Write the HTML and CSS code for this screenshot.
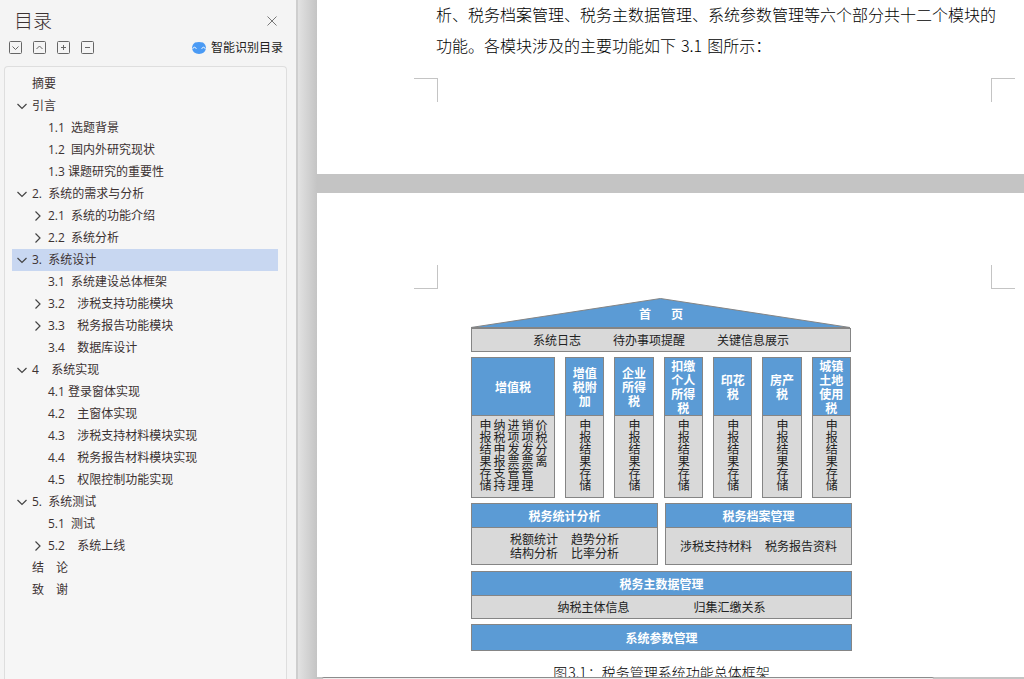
FILE: index.html
```html
<!DOCTYPE html>
<html lang="zh-CN">
<head>
<meta charset="utf-8">
<meta name="viewport" content="width=device-width, initial-scale=1">
<title>目录</title>
<link rel="stylesheet" href="styles.css">
</head>
<body>
<svg class="defs" aria-hidden="true">
  <symbol id="down" viewBox="0 0 12 12"><path d="M1.5 4 6 8.500 10.500 4"/></symbol>
  <symbol id="right" viewBox="0 0 12 12"><path d="M3.500 1.500 8 6 3.500 10.500"/></symbol>
</svg>
<aside class="sidebar">
  <header class="head">
    <h1 class="title">目录</h1>
    <button class="icon-btn" type="button" aria-label="关闭"><svg class="close" viewBox="0 0 10 10"><path d="M.5.5l9 9M9.500.5l-9 9"/></svg></button>
  </header>
  <div class="tools">
    <button class="icon-btn" type="button" aria-label="展开"><svg class="tool" viewBox="0 0 14 14"><rect x=".5" y=".5" width="12" height="12" rx="1"/><path d="M3.500 5.500l3 3 3-3"/></svg></button>
    <button class="icon-btn" type="button" aria-label="收起"><svg class="tool" viewBox="0 0 14 14"><rect x=".5" y=".5" width="12" height="12" rx="1"/><path d="M3.500 8l3-3 3 3"/></svg></button>
    <button class="icon-btn" type="button" aria-label="增加"><svg class="tool" viewBox="0 0 14 14"><rect x=".5" y=".5" width="12" height="12" rx="1"/><path d="M4 6.500h5M6.500 4v5"/></svg></button>
    <button class="icon-btn" type="button" aria-label="减少"><svg class="tool" viewBox="0 0 14 14"><rect x=".5" y=".5" width="12" height="12" rx="1"/><path d="M4 6.500h5"/></svg></button>
    <button class="smart" type="button"><svg class="robot" viewBox="0 0 14 12"><path class="face" d="M3 .5Q7-.5 11 .5 14 2.500 14 6.500 13 11.500 7 12 1 11.500 0 6.500 0 2.500 3 .5z"/><path class="eyes" d="M.5 6.500q2-2.500 4 0M9.500 6.500q2-2.500 4 0"/></svg>智能识别目录</button>
  </div>
  <nav class="tree" aria-label="目录">
    <div class="row"><a class="link" href="#">摘要</a></div>
    <div class="row"><button class="toggle" type="button" aria-label="折叠"><svg class="chev"><use href="#down"/></svg></button><a class="link" href="#">引言</a></div>
    <div class="row sub"><a class="link" href="#">1.1  选题背景</a></div>
    <div class="row sub"><a class="link" href="#">1.2  国内外研究现状</a></div>
    <div class="row sub"><a class="link" href="#">1.3 课题研究的重要性</a></div>
    <div class="row"><button class="toggle" type="button" aria-label="折叠"><svg class="chev"><use href="#down"/></svg></button><a class="link" href="#">2.  系统的需求与分析</a></div>
    <div class="row sub"><button class="toggle" type="button" aria-label="展开"><svg class="chev"><use href="#right"/></svg></button><a class="link" href="#">2.1  系统的功能介绍</a></div>
    <div class="row sub"><button class="toggle" type="button" aria-label="展开"><svg class="chev"><use href="#right"/></svg></button><a class="link" href="#">2.2  系统分析</a></div>
    <div class="row current"><button class="toggle" type="button" aria-label="折叠"><svg class="chev"><use href="#down"/></svg></button><a class="link" href="#" aria-current="true">3.  系统设计</a></div>
    <div class="row sub"><a class="link" href="#">3.1  系统建设总体框架</a></div>
    <div class="row sub"><button class="toggle" type="button" aria-label="展开"><svg class="chev"><use href="#right"/></svg></button><a class="link" href="#">3.2    涉税支持功能模块</a></div>
    <div class="row sub"><button class="toggle" type="button" aria-label="展开"><svg class="chev"><use href="#right"/></svg></button><a class="link" href="#">3.3    税务报告功能模块</a></div>
    <div class="row sub"><a class="link" href="#">3.4    数据库设计</a></div>
    <div class="row"><button class="toggle" type="button" aria-label="折叠"><svg class="chev"><use href="#down"/></svg></button><a class="link" href="#">4    系统实现</a></div>
    <div class="row sub"><a class="link" href="#">4.1 登录窗体实现</a></div>
    <div class="row sub"><a class="link" href="#">4.2    主窗体实现</a></div>
    <div class="row sub"><a class="link" href="#">4.3    涉税支持材料模块实现</a></div>
    <div class="row sub"><a class="link" href="#">4.4    税务报告材料模块实现</a></div>
    <div class="row sub"><a class="link" href="#">4.5    权限控制功能实现</a></div>
    <div class="row"><button class="toggle" type="button" aria-label="折叠"><svg class="chev"><use href="#down"/></svg></button><a class="link" href="#">5.  系统测试</a></div>
    <div class="row sub"><a class="link" href="#">5.1  测试</a></div>
    <div class="row sub"><button class="toggle" type="button" aria-label="展开"><svg class="chev"><use href="#right"/></svg></button><a class="link" href="#">5.2    系统上线</a></div>
    <div class="row"><a class="link" href="#">结　论</a></div>
    <div class="row"><a class="link" href="#">致　谢</a></div>
  </nav>
</aside>
<main class="workspace">
  <div class="pages">
    <section class="page first">
      <p class="prose">析、税务档案管理、税务主数据管理、系统参数管理等六个部分共十二个模块的<br>功能。各模块涉及的主要功能如下<span class="num">3.1</span>图所示：</p>
      <div class="marks"><i class="mark tr"></i><i class="mark tl"></i></div>
    </section>
    <section class="page second">
      <div class="marks"><i class="mark br"></i><i class="mark bl"></i></div>
      <figure class="figure">
        <div class="house">
          <div class="roof">
            <svg class="gable" viewBox="0 0 381 30" preserveAspectRatio="none"><path d="M0 29.500 190 .5 380 29.500z"/></svg>
            <b class="roof-text"><span>首</span><span>页</span></b>
          </div>
          <div class="beam"><span>系统日志</span><span>待办事项提醒</span><span>关键信息展示</span></div>
          <div class="pillars">
            <div class="card"><b class="cap">增值税</b><div class="vert">申报结果存储<br>纳税申报支持<br>进项发票管理<br>销项发票管理<br>价税分离</div></div>
            <div class="card"><b class="cap">增值<br>税附<br>加</b><div class="vert">申报结果存储</div></div>
            <div class="card"><b class="cap">企业<br>所得<br>税</b><div class="vert">申报结果存储</div></div>
            <div class="card"><b class="cap">扣缴<br>个人<br>所得<br>税</b><div class="vert">申报结果存储</div></div>
            <div class="card"><b class="cap">印花<br>税</b><div class="vert">申报结果存储</div></div>
            <div class="card"><b class="cap">房产<br>税</b><div class="vert">申报结果存储</div></div>
            <div class="card"><b class="cap">城镇<br>土地<br>使用<br>税</b><div class="vert">申报结果存储</div></div>
          </div>
        </div>
        <div class="halves">
          <div class="card"><b class="bar">税务统计分析</b><div class="cells two"><span>税额统计</span><span>趋势分析</span><span>结构分析</span><span>比率分析</span></div></div>
          <div class="card"><b class="bar">税务档案管理</b><div class="cells two"><span>涉税支持材料</span><span>税务报告资料</span></div></div>
        </div>
        <div class="card"><b class="bar">税务主数据管理</b><div class="cells wide"><span>纳税主体信息</span><span>归集汇缴关系</span></div></div>
        <div class="card"><b class="bar base">系统参数管理</b></div>
        <figcaption class="caption">图<span class="fig-num">3.1</span>：税务管理系统功能总体框架</figcaption>
      </figure>
    </section>
  </div>
  <div class="strip"></div>
</main>
</body>
</html>
```

FILE: styles.css
```css
* { box-sizing: border-box; }
body {
  margin: 0;
  height: 100vh;
  display: flex;
  overflow: hidden;
  background: #f4f4f4;
  color: #3c3232;
  font: 12px/22px "Open Sans", "Noto Sans CJK SC", sans-serif;
}
button { font: inherit; color: inherit; border: 0; padding: 0; background: none; }
svg { display: block; fill: none; stroke: #555; }
.defs { display: none; }

.sidebar {
  flex: 0 0 296px;
  display: flex;
  flex-direction: column;
  padding: 8px 9px 0 4px;
}
.head { display: flex; justify-content: space-between; align-items: center; padding: 0 10px; }
.title { margin: 0; font-size: 19px; line-height: 26px; font-weight: 300; }
.icon-btn { display: block; }
.close { width: 10px; height: 10px; stroke: #777; }
.tools { display: flex; align-items: center; gap: 10px; padding: 3px 4px 0 5px; }
.tool { width: 14px; height: 14px; stroke: #666; }
.smart { display: flex; align-items: center; gap: 5px; margin-left: auto; color: #222; }
.robot { width: 14px; height: 12px; stroke: none; }
.face { fill: #4a9af4; }
.eyes { stroke: #fff; stroke-width: 1; }
.tree {
  flex: 1;
  margin-top: 7px;
  padding: 6px 8px 0 7px;
  border: 1px solid #dedede;
  border-bottom: 0;
  border-radius: 4px 4px 0 0;
  background: #f6f6f6;
}
.row { display: flex; align-items: center; justify-content: flex-start; height: 22px; padding-left: 20px; }
.sub { padding-left: 36px; }
.current { background: #c8d7f1; }
.toggle { width: 16px; margin-left: -16px; }
.chev { width: 12px; height: 12px; stroke: #444; stroke-width: 1.2; }
.link { color: inherit; text-decoration: none; white-space: pre; }

.workspace {
  flex: 1;
  min-width: 0;
  display: flex;
  flex-direction: column;
  border-left: 2px solid #cecece;
  background: linear-gradient(90deg, #e2e2e2, #c4c4c4 19px);
}
.pages { flex: 1; min-height: 0; overflow: hidden; padding-left: 19px; }
.page { background: #fff; color: #000; }
.first { padding-bottom: 72px; margin-bottom: 19px; }
.second { padding: 72px 0 60px; }
.prose {
  margin: -1px 0 17px;
  padding-left: 119px;
  font-family: "Noto Sans CJK SC", sans-serif;
  font-size: 16px;
  line-height: 31px;
  font-weight: 300;
  white-space: nowrap;
}
.num { margin: 0 5px; }
.marks { display: flex; justify-content: space-between; padding: 0 9px 0 97px; }
.mark { width: 24px; height: 24px; border: 0 solid #c4c4c4; }
.tr { border-width: 1px 1px 0 0; }
.tl { border-width: 1px 0 0 1px; }
.br { border-width: 0 1px 1px 0; }
.bl { border-width: 0 0 1px 1px; }

.figure {
  display: flex;
  flex-direction: column;
  gap: 5px;
  width: 381px;
  margin: 9px 0 0 154px;
  color: #222;
  font: 400 12px/14px "Noto Sans CJK SC", sans-serif;
}
.house { padding-right: 1px; }
.roof { display: grid; }
.gable { grid-area: 1 / 1; width: 100%; height: 30px; fill: #5b9bd5; stroke: #858585; }
.roof-text { grid-area: 1 / 1; display: flex; justify-content: center; align-items: center; gap: 20px; padding-top: 2px; color: #fff; }
.beam {
  display: flex;
  justify-content: center;
  gap: 32px;
  padding: 4px 0;
  border: 1px solid #858585;
  background: #d9d9d9;
}
.pillars { display: grid; grid-template-columns: 84px repeat(6, 1fr); gap: 10px; margin-top: 5px; }
.card { display: flex; flex-direction: column; border: 1px solid #858585; background: #d9d9d9; }
.cap {
  display: flex;
  align-items: center;
  justify-content: center;
  height: 58px;
  border-bottom: 1px solid #858585;
  background: #5b9bd5;
  color: #fff;
  text-align: center;
}
.vert { align-self: center; height: 81px; padding-top: 3px; writing-mode: vertical-lr; }
.halves { display: grid; grid-template-columns: 1fr 1fr; gap: 7px; }
.bar { padding: 4px 0; line-height: 15px; text-align: center; background: #5b9bd5; color: #fff; }
.base { padding: 5px 0; }
.cells { flex: 1; border-top: 1px solid #858585; }
.two {
  display: grid;
  grid-template-columns: auto auto;
  justify-content: center;
  align-content: center;
  column-gap: 13px;
  padding: 4px 0;
}
.halves + .card { margin-top: 1px; }
.wide { display: flex; justify-content: center; gap: 64px; padding: 4px 0; }
.caption { padding-top: 5px; font-size: 14px; line-height: 22px; font-weight: 300; text-align: center; color: #000; }
.fig-num { margin: 0 1px; }
.strip {
  height: 2px;
  margin: 0 90px 0 24px;
  border-top: 1px solid #8c8c8c;
  border-radius: 2px 2px 0 0;
  background: #eee;
}
```
